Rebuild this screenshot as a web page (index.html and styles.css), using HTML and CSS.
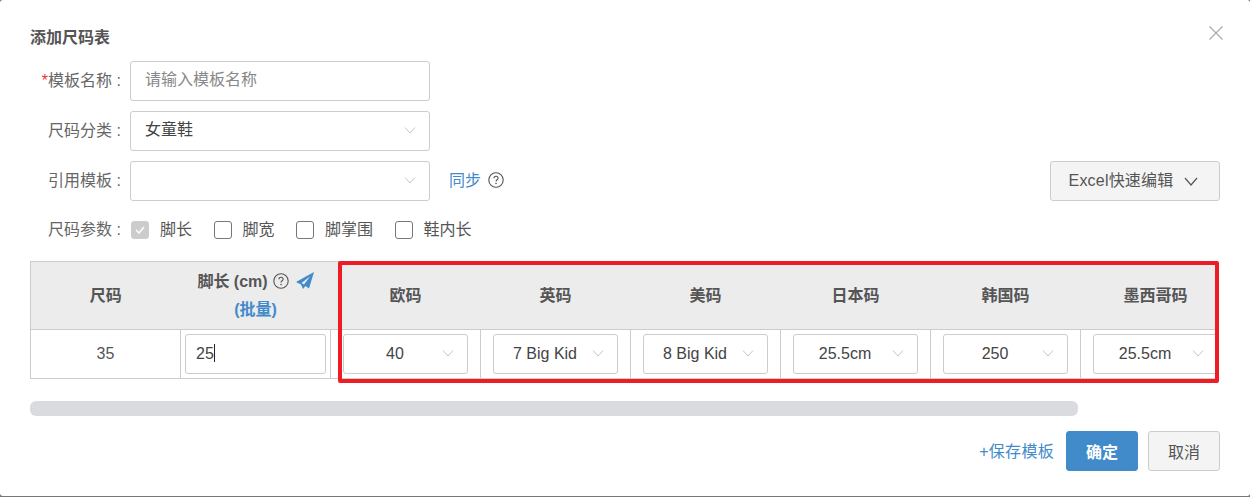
FILE: index.html
```html
<!DOCTYPE html>
<html lang="zh-CN">
<head>
  <meta charset="UTF-8">
  <title>添加尺码表</title>
  <link rel="stylesheet" href="styles.css">
</head>
<body>
  <div class="dialog">
    <svg class="close" width="16" height="16" viewBox="0 0 16 16"><path d="M1.500 1.500l13 13M14.500 1.500l-13 13"/></svg>
    <h3 class="title">添加尺码表</h3>

    <div class="form-row">
      <label class="label"><i class="req">*</i>模板名称 :</label>
      <div class="field placeholder">请输入模板名称</div>
    </div>
    <div class="form-row">
      <label class="label">尺码分类 :</label>
      <div class="field">女童鞋
        <svg class="arrow" width="12" height="7" viewBox="0 0 12 7"><path d="M1 .5l5 5.500 5-5.500"/></svg>
      </div>
    </div>
    <div class="form-row">
      <label class="label">引用模板 :</label>
      <div class="field">
        <svg class="arrow" width="12" height="7" viewBox="0 0 12 7"><path d="M1 .5l5 5.500 5-5.500"/></svg>
      </div>
      <a class="sync">同步</a>
      <svg class="help sync-help" width="16" height="16" viewBox="0 0 16 16"><circle cx="8" cy="8" r="7.200"/><path d="M5.900 6.300c0-1.300 1-2.100 2.100-2.100s2.100.8 2.100 2c0 1.500-2.100 1.600-2.100 3.200"/><circle class="dot" cx="8" cy="11.500" r=".8"/></svg>
      <button class="excel"><span class="excel-text">Excel快速编辑</span>
        <svg width="14" height="9" viewBox="0 0 14 9"><path d="M1 1l6 7 6-7"/></svg>
      </button>
    </div>
    <div class="form-row check-row">
      <label class="label">尺码参数 :</label>
      <span class="check"><i class="box on"><svg width="12" height="10" viewBox="0 0 12 10"><path d="M2 5l3 3 5-6"/></svg></i>脚长</span>
      <span class="check"><i class="box"></i>脚宽</span>
      <span class="check"><i class="box"></i>脚掌围</span>
      <span class="check"><i class="box"></i>鞋内长</span>
    </div>

    <div class="table-wrap">
      <table class="size-table">
        <thead>
          <tr>
            <th>尺码</th>
            <th class="foot-head">
              <div class="foot-title">脚长 (cm)
                <svg class="help" width="16" height="16" viewBox="0 0 16 16"><circle cx="8" cy="8" r="7.200"/><path d="M5.900 6.300c0-1.300 1-2.100 2.100-2.100s2.100.8 2.100 2c0 1.500-2.100 1.600-2.100 3.200"/><circle class="dot" cx="8" cy="11.500" r=".8"/></svg>
                <svg class="plane" width="18" height="18" viewBox="0 0 18 18"><path fill-rule="evenodd" d="M18 0L0 10l5 2.500L7 17l2.500-3 3.500 2.500zM14 4.500L5.500 11l2.500 1.500z"/></svg>
              </div>
              <a class="batch">(批量)</a>
            </th>
            <th>欧码</th>
            <th>英码</th>
            <th>美码</th>
            <th>日本码</th>
            <th>韩国码</th>
            <th>墨西哥码</th>
          </tr>
        </thead>
        <tbody>
          <tr>
            <td>35</td>
            <td><div class="cell-input">25<i class="caret"></i></div></td>
            <td><div class="cell-select">40<svg class="arrow" width="12" height="7" viewBox="0 0 12 7"><path d="M1 .5l5 5.500 5-5.500"/></svg></div></td>
            <td><div class="cell-select">7 Big Kid<svg class="arrow" width="12" height="7" viewBox="0 0 12 7"><path d="M1 .5l5 5.500 5-5.500"/></svg></div></td>
            <td><div class="cell-select">8 Big Kid<svg class="arrow" width="12" height="7" viewBox="0 0 12 7"><path d="M1 .5l5 5.500 5-5.500"/></svg></div></td>
            <td><div class="cell-select">25.5cm<svg class="arrow" width="12" height="7" viewBox="0 0 12 7"><path d="M1 .5l5 5.500 5-5.500"/></svg></div></td>
            <td><div class="cell-select">250<svg class="arrow" width="12" height="7" viewBox="0 0 12 7"><path d="M1 .5l5 5.500 5-5.500"/></svg></div></td>
            <td><div class="cell-select">25.5cm<svg class="arrow" width="12" height="7" viewBox="0 0 12 7"><path d="M1 .5l5 5.500 5-5.500"/></svg></div></td>
          </tr>
        </tbody>
      </table>
      <div class="mark"></div>
    </div>
    <div class="scrollbar"></div>

    <div class="footer">
      <a class="save">+保存模板</a>
      <button class="btn primary">确定</button>
      <button class="btn">取消</button>
    </div>
  </div>
</body>
</html>
```

FILE: styles.css
```css
* { box-sizing: border-box; }
html, body { margin: 0; height: 100%; overflow: hidden; background: #777; }
body {
  font-family: "Liberation Sans", "Noto Sans CJK SC", sans-serif;
  font-size: 16px;
  color: #555;
}
.dialog {
  position: relative;
  height: 496px;
  padding: 29px 30px 0;
  background: #fff;
  border-radius: 3px;
}
.close {
  position: absolute;
  top: 25px;
  right: 26px;
}
.close path { stroke: #aaa; stroke-width: 1.2; fill: none; }
.title {
  margin: 0 0 14px;
  height: 18px;
  line-height: 18px;
  font-size: 16px;
  font-weight: bold;
  color: #555;
}
.form-row {
  display: flex;
  align-items: center;
  height: 40px;
  margin-bottom: 10px;
}
.label {
  width: 91px;
  margin-right: 9px;
  padding-bottom: 4px;
  flex: none;
  text-align: right;
  color: #666;
  white-space: nowrap;
}
.req { color: #e33; font-style: normal; }
.field {
  position: relative;
  width: 300px;
  height: 40px;
  line-height: 36px;
  padding: 0 14px;
  border: 1px solid #ccc;
  border-radius: 3px;
  color: #444;
  background: #fff;
}
.placeholder { color: #888; }
.arrow {
  position: absolute;
  right: 13px;
  top: 15px;
}
.arrow path { stroke: #c4c4c4; stroke-width: 1; fill: none; }
.sync { margin-left: 19px; padding-bottom: 4px; color: #428bca; }
.help { margin-left: 8px; vertical-align: -2px; }
.sync-help { margin-left: 7px; margin-top: -2px; }
.help circle { stroke: #555; stroke-width: 1.1; fill: none; }
.help path { stroke: #555; stroke-width: 1.1; fill: none; }
.help .dot { fill: #555; stroke: none; }
.excel {
  margin-left: auto;
  height: 40px;
  width: 170px;
  padding: 0 3px 0 0;
  border: 1px solid #ccc;
  border-radius: 3px;
  background: #f4f4f4;
  color: #555;
  font: inherit;
  display: flex;
  align-items: center;
  justify-content: center;
  gap: 11px;
}
.excel-text { padding-bottom: 4px; letter-spacing: .2px; }
.excel path { stroke: #555; stroke-width: 1.2; fill: none; }
.check-row { height: 18px; margin: 20px 0 22px; }
.check {
  display: flex;
  align-items: center;
  margin-right: 21.5px;
  color: #555;
  line-height: 18px;
}
.box {
  width: 18px;
  height: 18px;
  margin-right: 11px;
  border: 1px solid #777;
  border-radius: 3px;
  display: flex;
  align-items: center;
  justify-content: center;
}
.check:first-of-type { margin-left: 1px; }
.box.on { background: #ccc; border-color: #ccc; }
.box path { stroke: #fff; stroke-width: 1.5; fill: none; }
.table-wrap {
  position: relative;
  width: 1190px;
}
.size-table {
  border-collapse: collapse;
  table-layout: fixed;
  width: 1200px;
  display: block;
  overflow: hidden;
  max-width: 1188px;
  border-top: 1px solid #ccc;
}
.size-table th, .size-table td {
  width: 150px;
  min-width: 150px;
  text-align: center;
  padding: 0;
  vertical-align: middle;
}
.size-table th {
  height: 67px;
  padding-bottom: 2px;
  background: #ececed;
  color: #555;
  font-weight: bold;
  border-bottom: 1px solid #ccc;
}
.size-table th:first-child { border-left: 1px solid #ccc; }
.size-table td {
  height: 49px;
  border-left: 1px solid #ccc;
  border-bottom: 1px solid #ccc;
  color: #555;
}
.size-table .foot-head { padding: 0; line-height: 28px; white-space: nowrap; }
.foot-title { margin-top: 1px; height: 28px; }
.foot-head .help { margin-left: 1px; }
.plane { vertical-align: -3px; margin-left: 2px; }
.plane path { fill: #428bca; }
.batch { color: #428bca; display: block; }
.cell-input, .cell-select {
  position: relative;
  width: 125px;
  height: 40px;
  line-height: 38px;
  margin-left: 4px;
  border: 1px solid #ccc;
  border-radius: 3px;
  background: #fff;
  color: #444;
  text-align: left;
}
.cell-input { width: 141px; padding-left: 10px; }
.cell-select { padding: 0 21px 0 0; text-align: center; margin-left: 12px; }
.caret {
  display: inline-block;
  width: 1px;
  height: 18px;
  background: #222;
  vertical-align: -3px;
}
.mark {
  position: absolute;
  left: 308px;
  top: 0;
  width: 881px;
  height: 122px;
  border: 4px solid #ee1c25;
  border-radius: 2px;
}
.scrollbar {
  width: 1048px;
  height: 15px;
  margin-top: 22px;
  border-radius: 6px;
  background: #dadbdf;
}
.footer {
  display: flex;
  align-items: center;
  justify-content: flex-end;
  height: 40px;
  margin-top: 15px;
}
.save { color: #428bca; margin-right: 12px; padding-bottom: 2px; letter-spacing: .3px; }
.btn {
  width: 72px;
  height: 40px;
  margin-left: 10px;
  border: 1px solid #ccc;
  border-radius: 3px;
  background: #f4f4f4;
  color: #555;
  font: inherit;
}
.btn.primary {
  margin-left: 0;
  background: #428bca;
  border-color: #428bca;
  color: #fff;
  font-weight: bold;
}
```
